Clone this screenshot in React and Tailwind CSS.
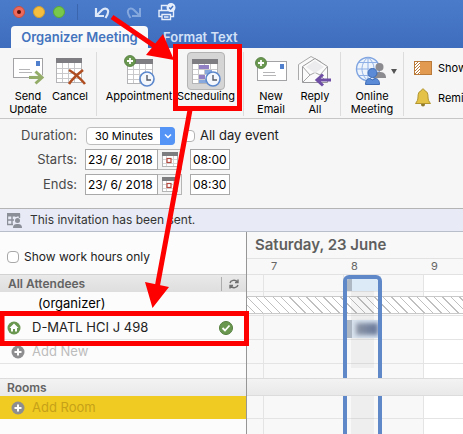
import React, { useState } from 'react';

const hours = [7, 8, 9];

function Clock({ x, y }) {
  return (
    <g transform={`translate(${x} ${y})`}>
      <circle r="7" fill="#f4f8fd" stroke="#5b87cc" strokeWidth="1.6" />
      <path d="M0 -4V1H4" fill="none" stroke="#555b66" strokeWidth="1.4" />
    </g>
  );
}

function PlusBadge({ x, y }) {
  return (
    <g transform={`translate(${x} ${y})`}>
      <circle r="5.5" fill="#6b9850" stroke="#4f7a3a" strokeWidth="0.8" />
      <path d="M-3 0H3M0 -3V3" stroke="#fff" strokeWidth="1.8" />
    </g>
  );
}

function Sheet({ x, y }) {
  return (
    <g transform={`translate(${x} ${y})`}>
      <rect x="0.5" y="0.5" width="25" height="24" fill="#fff" stroke="#b4b4b6" />
      <path d="M6.5 5V24M12.5 5V24M18.5 5V24M1 10.5H25M1 15.5H25M1 20.5H25" stroke="#c9c9cb" />
      <rect width="26" height="5" fill="#7d7d82" />
    </g>
  );
}

function SendIcon() {
  return (
    <svg width="34" height="30" viewBox="0 0 34 30">
      <rect x="2.5" y="2.5" width="29" height="19" fill="#fff" stroke="#a3a3a6" />
      <rect x="25" y="5" width="4" height="5" fill="#4f7fcd" />
      <path d="M8 13.5H19M8 16.5H21" stroke="#b5b5b8" />
      <path d="M18 21.5H29M24 15.5L30.5 21.5L24 27.5" fill="none" stroke="#f6f6f6" strokeWidth="4.5" />
      <path d="M18 21.5H30M24.5 15.5L31 21.5L24.5 27.5" fill="none" stroke="#93ac68" strokeWidth="3" />
    </svg>
  );
}

function CancelIcon() {
  return (
    <svg width="32" height="30" viewBox="0 0 32 30">
      <Sheet x={2} y={2} />
      <path d="M15 14C20 17 26 22 31 28M29 14C24 18 18 23 15 28" fill="none" stroke="#b04e22" strokeWidth="2.6" />
    </svg>
  );
}

function AppointmentIcon() {
  return (
    <svg width="32" height="34" viewBox="0 0 32 34">
      <Sheet x={4} y={5} />
      <PlusBadge x={7} y={7} />
      <Clock x={24} y={25} />
    </svg>
  );
}

function SchedulingIcon() {
  return (
    <svg width="32" height="34" viewBox="0 0 32 34">
      <Sheet x={2} y={5} />
      <rect x="9" y="11" width="10" height="4" fill="#9180c4" />
      <rect x="15" y="16" width="7" height="4" fill="#86a8dc" />
      <rect x="9" y="21" width="6" height="4" fill="#9180c4" />
      <rect x="9" y="26" width="7" height="3" fill="#86a8dc" />
      <Clock x={23} y={25} />
    </svg>
  );
}

function NewEmailIcon() {
  return (
    <svg width="34" height="30" viewBox="0 0 34 30">
      <rect x="3.5" y="5.5" width="29" height="19" fill="#fff" stroke="#a3a3a6" />
      <rect x="26" y="8" width="4" height="5" fill="#4f7fcd" />
      <path d="M9 16.5H21M9 19.5H22" stroke="#b5b5b8" />
      <PlusBadge x={7} y={7} />
    </svg>
  );
}

function ReplyAllIcon() {
  return (
    <svg width="34" height="32" viewBox="0 0 34 32">
      <path d="M0.5 25V9.5L13 1.5L23 7" fill="#fafafa" stroke="#aaa" />
      <path d="M4.5 27.5V11.5L17 3.5L29.5 11.5V27.5Z" fill="#fbfbfb" stroke="#9a9a9c" />
      <path d="M4.5 11.5L12 20L17 17.5L22 20L29.5 11.5M4.5 27.5L12 20M22 20L27 25" fill="none" stroke="#a5a5a7" />
      <path d="M8 12L17 5.5L26 12L17 18Z" fill="#ececee" />
      <path d="M20 25H33M25 19.500L19 25L25 30.500" fill="none" stroke="#6f4ea5" strokeWidth="3" />
    </svg>
  );
}

function OnlineIcon() {
  return (
    <svg width="32" height="30" viewBox="0 0 32 30">
      <circle cx="13" cy="13" r="11.5" fill="#eef4fc" stroke="#7fa4e0" strokeWidth="1.4" />
      <path d="M13 1.5V24.5M2 13H24M4 6.5H22M4 19.5H20M13 1.5C5 7 5 19 13 24.5M13 1.5C21 7 21 19 13 24.5" fill="none" stroke="#8fb0e6" />
      <circle cx="24.5" cy="11" r="4" fill="#8b8b90" />
      <path d="M18 22C18 17 21 16 24.5 16S31 17 31 22Z" fill="#8b8b90" />
      <circle cx="17.5" cy="17" r="4.5" fill="#5b8bd6" stroke="#3f6cb5" />
      <path d="M10.5 28.5C10.5 23.5 13 22.5 15 22.5L17.5 24L20 22.5C22 22.5 24.5 23.5 24.5 28.5Z" fill="#5b8bd6" stroke="#3f6cb5" />
    </svg>
  );
}

function DateIcon() {
  return (
    <svg width="16" height="15" viewBox="0 0 16 15">
      <rect x="0.5" y="0.5" width="15" height="14" fill="#fff" stroke="#b4b4b4" />
      <path d="M4.5 4V14M11.5 4V14M1 7.5H15M1 11.5H15" stroke="#d5d5d5" />
      <rect width="16" height="4" fill="#7d7d80" />
      <rect x="5" y="6.5" width="4" height="4" fill="#fff" stroke="#b5493f" strokeWidth="1.2" />
    </svg>
  );
}

function GreyPlus() {
  return (
    <svg width="14" height="14" viewBox="0 0 14 14">
      <circle cx="7" cy="7" r="6.5" fill="#8e8e90" />
      <path d="M3.5 7H10.5M7 3.5V10.5" stroke="#fff" strokeWidth="2" />
    </svg>
  );
}

function RibbonButton({ icon, label, className, active }) {
  return (
    <button className={`flex shrink-0 flex-col items-center text-center text-[11px] leading-[13px] text-black ${className}`}>
      <span className={`flex h-[38px] w-[38px] items-center justify-center ${active ? 'rounded border border-[#b3b3b3] bg-[#d5d5d5]' : ''}`}>
        {icon}
      </span>
      {label}
    </button>
  );
}

function Divider() {
  return <div className="mx-1 h-16 w-px shrink-0 bg-[#dcdcdc]" />;
}

function TitleBar() {
  return (
    <div className="flex h-6 items-center pl-[13px]">
      <div className="flex gap-2">
        <button aria-label="Close" className="flex h-3 w-3 items-center justify-center rounded-full border border-[#c4503f] bg-[#ee6a5c]">
          <span className="h-1 w-1 rounded-full bg-[#5c0d08]" />
        </button>
        <button aria-label="Minimize" className="h-3 w-3 rounded-full border border-[#d3a02e] bg-[#f5be3f]" />
        <button aria-label="Zoom" className="h-3 w-3 rounded-full border border-[#5ba838] bg-[#78c94b]" />
      </div>
      <div className="ml-3 h-4 w-px bg-[#3b66ae]" />
      <div className="ml-4 flex items-center gap-4">
        <button aria-label="Undo">
          <svg width="16" height="14" viewBox="0 0 16 14" fill="none" stroke="#dce7f8" strokeWidth="2.2">
            <path d="M2 3V11H10M2.500 10.500L8 5C10 3 13 3 14 5.500C14.800 8 13.500 10 11.500 13" />
          </svg>
        </button>
        <button aria-label="Redo">
          <svg width="16" height="14" viewBox="0 0 16 14" fill="none" stroke="#84a8de" strokeWidth="2">
            <path d="M14 3V11H6M13.500 10.500L8 5C6 3 3 3 2 5.500C1.200 8 2.500 10 4.500 13" />
          </svg>
        </button>
        <button aria-label="Print">
          <svg width="18" height="18" viewBox="0 0 18 18" fill="none" stroke="#e6eefb" strokeWidth="1.4">
            <path d="M3.5 7V2.5H9M3.5 13.5H1V7.5H15.5V13.5H13M4 11.5H12.5V16.5H4ZM6 14H10.5" />
            <circle cx="13" cy="4.500" r="3.800" fill="#e6eefb" />
            <path d="M11.200 4.500L12.600 6L15 3" stroke="#4373c4" />
          </svg>
        </button>
      </div>
    </div>
  );
}

function Ribbon() {
  return (
    <div className="flex h-[71px] overflow-hidden border-b border-[#c6c6c6] bg-[#f6f6f6] pt-1 pl-2">
      <RibbonButton className="w-10" icon={<SendIcon />} label={<>Send<br />Update</>} />
      <RibbonButton className="w-11" icon={<CancelIcon />} label="Cancel" />
      <Divider />
      <RibbonButton className="ml-1 w-[68px]" icon={<AppointmentIcon />} label="Appointment" />
      <RibbonButton className="w-[66px]" icon={<SchedulingIcon />} label="Scheduling" active />
      <Divider />
      <RibbonButton className="w-[46px]" icon={<NewEmailIcon />} label={<>New<br />Email</>} />
      <RibbonButton className="w-[42px]" icon={<ReplyAllIcon />} label={<>Reply<br />All</>} />
      <Divider />
      <RibbonButton
        className="w-[54px]"
        icon={
          <span className="flex shrink-0 items-center gap-1 pl-2">
            <OnlineIcon />
            <svg width="6" height="5" viewBox="0 0 6 5"><path d="M0 0H6L3 5Z" fill="#555" /></svg>
          </span>
        }
        label={<>Online<br />Meeting</>}
      />
      <Divider />
      <div className="ml-1 flex shrink-0 flex-col gap-3 pt-2 pl-0.5 text-[11px] leading-4 whitespace-nowrap">
        <button className="flex items-center gap-1.5">
          <svg width="18" height="16" viewBox="0 0 18 16">
            <rect x="0.5" y="1.5" width="17" height="13" fill="#e19a4f" stroke="#b97a3a" />
            <rect x="1" y="2" width="5" height="12" fill="#fff" />
            <path d="M1 5L4 2M1 8L6 3M1 11L6 6M1 14L6 9M4 14L6 12" stroke="#b97a3a" />
          </svg>
          Show
        </button>
        <button className="flex items-center gap-1.5">
          <svg width="18" height="19" viewBox="0 0 18 19">
            <circle cx="9" cy="16.5" r="2" fill="#8e7a2c" />
            <path d="M9 1C10 1 10.500 1.800 10.500 2.500C13.500 3.500 14 6 14 9C14 12 15 13.500 16.500 15.500H1.500C3 13.500 4 12 4 9C4 6 4.500 3.500 7.500 2.500C7.500 1.800 8 1 9 1Z" fill="#e3c245" stroke="#b2952f" />
          </svg>
          Remi
        </button>
      </div>
    </div>
  );
}

function DateRow({ id, label, date, time }) {
  return (
    <div className="flex h-[21px] items-center">
      <label htmlFor={id} className="mr-2 w-[77px] text-right text-[13px] text-[#4a4a4a]">{label}</label>
      <input id={id} defaultValue={date} className="h-[21px] w-[73px] border border-[#a9a9a9] bg-white pl-0.5 text-black outline-none" />
      <button aria-label={`${label} calendar`} className="flex h-[21px] w-6 items-center justify-center border border-l-0 border-[#b5b5b5] bg-[#f3f3f3]">
        <DateIcon />
      </button>
      <input aria-label={`${label} time`} defaultValue={time} className="ml-2 h-[21px] w-10 border border-[#a9a9a9] bg-white px-0.5 text-black outline-none" />
    </div>
  );
}

function MeetingForm() {
  const [duration, setDuration] = useState('30 Minutes');

  return (
    <div className="flex h-[90px] flex-col gap-1 border-b border-[#b4b4b4] bg-[#f6f6f6] pt-2 text-xs">
      <div className="flex h-[18px] items-center">
        <label htmlFor="duration" className="mr-[9px] w-[77px] text-right text-[13px] text-[#4a4a4a]">Duration:</label>
        <div className="relative">
          <select
            id="duration"
            value={duration}
            onChange={(e) => setDuration(e.target.value)}
            className="block h-[18px] w-[89px] appearance-none rounded border border-[#bdbdbd] bg-white pl-2 text-[11px] leading-4 text-black"
          >
            <option>30 Minutes</option>
            <option>1 Hour</option>
          </select>
          <span className="pointer-events-none absolute inset-y-0 right-0 flex w-[15px] items-center justify-center rounded-r bg-[#5494f7]">
            <svg width="8" height="5" viewBox="0 0 8 5" fill="none" stroke="#fff" strokeWidth="1.5"><path d="M1 0.5L4 3.5L7 0.5" /></svg>
          </span>
        </div>
        <label className="ml-2 flex items-center gap-[5px] text-[13px] text-[#222]">
          <input type="checkbox" className="h-3 w-3 appearance-none rounded-sm border border-[#b3b3b3] bg-white" />
          All day event
        </label>
      </div>
      <DateRow id="starts" label="Starts:" date="23/ 6/ 2018" time="08:00" />
      <DateRow id="ends" label="Ends:" date="23/ 6/ 2018" time="08:30" />
    </div>
  );
}

function Attendees() {
  return (
    <div className="w-[247px] shrink-0 border-r border-[#969696] bg-[#fcfcfc] text-[13px]">
      <label className="flex h-[42px] items-center gap-[5px] pt-2 pl-[7px] text-xs text-[#222]">
        <input type="checkbox" className="h-3 w-3 appearance-none rounded-sm border border-[#a8a8a8] bg-white" />
        Show work hours only
      </label>
      <div className="flex h-[18px] items-center border-t border-[#d2d2d2] bg-linear-to-b from-[#e9e9e9] to-[#dedede] pl-2 text-xs font-semibold text-[#636363]">
        <span className="flex-1">All Attendees</span>
        <span className="h-[14px] w-px bg-[#adadad]" />
        <button aria-label="Refresh" className="px-[7px]">
          <svg width="10" height="10" viewBox="0 0 10 10" fill="none" stroke="#707070" strokeWidth="1.4">
            <path d="M1 4C1.500 1.500 6 0 8.500 3M9 0.500V3.500H6M9 6C8.500 8.500 4 10 1.500 7M1 9.500V6.500H4" />
          </svg>
        </button>
      </div>
      <div className="flex h-6 items-start border-b border-[#e4e4e4] pt-[3px] pl-[38px] leading-4 text-black">(organizer)</div>
      <div className="flex h-6 items-center border-b border-[#e4e4e4] pr-[13px] pl-[7px] text-[#222]">
        <svg width="14" height="14" viewBox="0 0 14 14">
          <circle cx="7" cy="7" r="6.5" fill="#6b9850" />
          <path d="M7 2.5L2.5 7H4V10.5H6V8H8V10.5H10V7H11.5Z" fill="#fff" />
        </svg>
        <span className="flex-1 pl-[11px]">D-MATL HCI J 498</span>
        <svg width="14" height="14" viewBox="0 0 14 14">
          <circle cx="7" cy="7" r="6.5" fill="#6b9850" stroke="#527d3c" />
          <path d="M3.5 7L6 9.5L10.5 4.5" fill="none" stroke="#fff" strokeWidth="1.8" />
        </svg>
      </div>
      <button className="flex h-6 w-full items-center gap-[7px] border-b border-[#e4e4e4] pl-[11px] text-[#bdbdbd]"><GreyPlus />Add New</button>
      <div className="mt-[14px] flex h-[18px] items-center border-t border-[#dcdcdc] bg-linear-to-b from-[#f3f3f3] to-[#e9e9e9] pl-[7px] text-xs font-semibold text-[#636363]">Rooms</div>
      <button className="flex h-[23px] w-full items-center gap-[7px] bg-[#f0cb22] pl-[11px] text-[#c6a118]"><GreyPlus />Add Room</button>
    </div>
  );
}

function Timeline() {
  return (
    <div className="flex min-w-0 flex-1 flex-col overflow-hidden bg-[#f8f8f8]">
      <h2 className="h-[27px] border-b border-[#e2e2e2] pl-2 text-[15px] leading-[26px] font-semibold whitespace-nowrap text-[#5f5f5f]">Saturday, 23 June</h2>
      <div className="flex h-4 border-b border-[#e2e2e2] pl-6 text-[11px] leading-[15px] text-[#666]">
        {hours.map((h) => <span key={h} className="w-20 shrink-0">{h}</span>)}
      </div>
      <div className="grid flex-1 grid-cols-1 grid-rows-1">
        {/* hour columns */}
        <div className="col-start-1 row-start-1 flex pl-4">
          <div className="w-20 shrink-0 border-l border-[#e4e4e4]" />
          <div className="w-20 shrink-0 border-l border-[#e4e4e4]" />
          <div className="flex-1 border-l border-[#e4e4e4] bg-white" />
        </div>
        {/* attendee rows */}
        <div className="col-start-1 row-start-1">
          <div className="h-[17px] border-b border-[#e4e4e4]" />
          <div className="h-6 border-b border-[#e4e4e4] pt-1">
            <div className="h-[18px] border-y border-[#c9c9c9] bg-[repeating-linear-gradient(45deg,#fff_0px,#fff_5px,#c0c0c0_5px,#c0c0c0_6px)]" />
          </div>
          <div className="h-6 border-b border-[#e4e4e4]" />
          <div className="h-6 border-b border-[#e4e4e4]" />
          <div className="h-[55px] border-b border-[#e4e4e4]" />
        </div>
        {/* selected half hour */}
        <div className="col-start-1 row-start-1 flex flex-col pl-24">
          <div className="h-[103px] w-[39px] overflow-hidden rounded-t-md border-4 border-b-0 border-[#5f88c8]">
            <div className="h-3 border-l-[5px] border-[#aeb7c4] bg-[#dce9f6]" />
            <div className="mr-1 ml-1 h-[29px] bg-black/[0.04]" />
            <div className="flex h-[18px] items-center border-l-[5px] border-[#aeb7c4] bg-[#d8e3ef]">
              <div className="ml-1 h-3 w-6 bg-linear-to-r from-[#8d96a6] to-[#68789a] blur-[2px]" />
            </div>
            <div className="mr-1 ml-1 h-[30px] bg-black/[0.04]" />
          </div>
          <div className="-ml-24 h-[18px] border-y border-[#dcdcdc] bg-linear-to-b from-[#f3f3f3] to-[#e9e9e9]" />
          <div className="w-[39px] flex-1 border-x-4 border-[#5f88c8] px-1">
            <div className="h-full bg-black/[0.04]" />
          </div>
        </div>
      </div>
    </div>
  );
}

function Annotations() {
  return (
    <svg className="pointer-events-none absolute top-0 left-0" width="260" height="360" viewBox="0 0 260 360">
      <g fill="none" stroke="#ff0000" strokeWidth="5">
        <rect x="175.5" y="46.5" width="64" height="62" />
        <rect x="2" y="313.5" width="244.5" height="30" />
        <path d="M112 17L156 47M190 110L157 288" />
      </g>
      <path d="M163 34L146 55L174 60ZM145 282L169 287L152.5 308Z" fill="#ff0000" />
    </svg>
  );
}

export default function App() {
  return (
    <div className="relative flex min-h-screen flex-col overflow-hidden bg-[#fcfcfc] font-['Inter','Liberation_Sans',sans-serif]">
      <header className="bg-linear-to-b from-[#4a7bcb] to-[#3f6dbd]">
        <TitleBar />
        <nav className="flex h-6 items-end pl-[11px] text-[13px] leading-[22px] font-semibold whitespace-nowrap">
          <button className="h-[22px] w-[137px] rounded-t-sm bg-[#f9f9f9] text-[#4373bd]">Organizer Meeting</button>
          <button className="h-[22px] px-[15px] text-[#d3e1f7]">Format Text</button>
        </nav>
      </header>
      <Ribbon />
      <MeetingForm />
      <div className="flex h-[23px] items-center gap-2 border-b border-[#b9bfca] bg-[#e8ebf5] pl-[7px] text-xs text-[#333]">
        <svg width="15" height="15" viewBox="0 0 15 15">
          <path d="M0.5 1.5H12.5V5M0.5 1.5V11.5H6M0.5 7H7M5 2V11M9 2V4" fill="none" stroke="#8b8f98" strokeWidth="1.4" />
          <rect width="13" height="3.5" fill="#8b8f98" />
          <circle cx="10.5" cy="7.5" r="2.5" fill="#8b8f98" />
          <path d="M6 15C6 11.5 8 11 10.5 11S15 11.5 15 15Z" fill="#8b8f98" />
        </svg>
        This invitation has been sent.
      </div>
      <main className="flex flex-1">
        <Attendees />
        <Timeline />
      </main>
      <Annotations />
    </div>
  );
}
